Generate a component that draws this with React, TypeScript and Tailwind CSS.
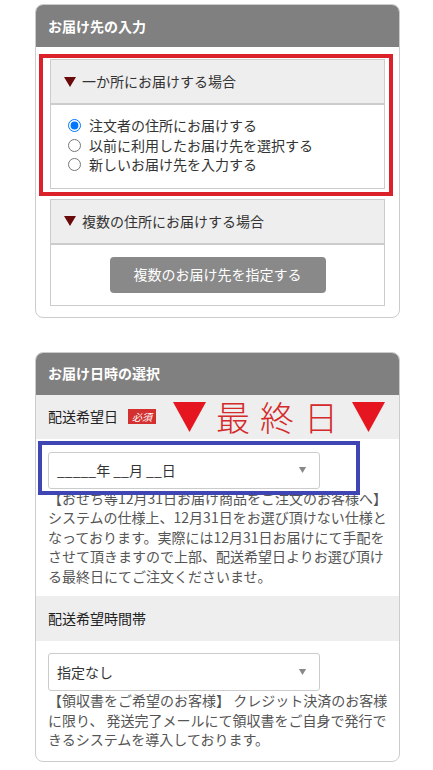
import React from "react";

function Tri({ className }: { className: string }) {
  return (
    <svg viewBox="0 0 12 10" className={className} aria-hidden="true">
      <path d="M0 0H12L6 10Z" fill="currentColor" />
    </svg>
  );
}

function BigTri({ className }: { className: string }) {
  return (
    <svg viewBox="0 0 33 30" className={className} aria-hidden="true">
      <path d="M0 0H33L16.5 30Z" fill="currentColor" />
    </svg>
  );
}

function SelectBox({ value, h }: { value: string; h: string }) {
  return (
    <div
      className={`flex w-[272px] items-center justify-between rounded-[3px] border border-[#ccc] bg-white pl-[8px] pr-[12px] text-[#333] ${h}`}
    >
      <span className="whitespace-pre">{value}</span>
      <Tri className="h-[6px] w-[9px] text-[#888]" />
    </div>
  );
}

const radios = [
  { label: "注文者の住所にお届けする", checked: true },
  { label: "以前に利用したお届け先を選択する", checked: false },
  { label: "新しいお届け先を入力する", checked: false },
];

export default function App() {
  return (
    <div className="min-h-[770px] bg-white pt-[4px] font-['Noto_Sans_CJK_JP','Noto_Sans',sans-serif] text-[14px] text-[#333]">
      <div className="ml-[35px] w-[365px]">
        {/* お届け先 */}
        <section className="overflow-hidden rounded-[8px] border border-[#ccc] bg-white">
          <h2 className="flex h-[42px] items-center bg-[#808080] pl-[12px] text-[14px] font-bold text-white">
            お届け先の入力
          </h2>
          <div className="px-[14px] pb-[11px] pt-[12px]">
            <div className="relative">
              <div className="border border-[#ccc]">
                <div className="flex h-[45px] items-center gap-[6px] border-b-2 border-[#ccc] bg-[#eee] pl-[13px]">
                  <Tri className="h-[10px] w-[12px] text-[#6b0a0a]" />
                  <span>一か所にお届けする場合</span>
                </div>
                <div className="flex flex-col pb-[13px] pl-[17px] pt-[11px] leading-[19.5px]">
                  {radios.map((r) => (
                    <label key={r.label} className="flex h-[19.5px] items-center gap-[8px]">
                      <input
                        type="radio"
                        name="dest"
                        defaultChecked={r.checked}
                        className="m-0 h-[13px] w-[13px]"
                      />
                      <span>{r.label}</span>
                    </label>
                  ))}
                </div>
              </div>
              <div className="pointer-events-none absolute -bottom-[7px] -left-[11px] -right-[8px] -top-[5px] border-4 border-[#db222b]" />
            </div>

            <div className="mt-[10px] border border-[#ccc]">
              <div className="flex h-[45px] items-center gap-[6px] border-b-2 border-[#ccc] bg-[#eee] pl-[13px]">
                <Tri className="h-[10px] w-[12px] text-[#6b0a0a]" />
                <span>複数の住所にお届けする場合</span>
              </div>
              <div className="pb-[12px] pt-[12px]">
                <button className="mx-auto flex h-[36px] w-[216px] items-center justify-center rounded-[4px] bg-[#898989] text-[14px] text-white">
                  複数のお届け先を指定する
                </button>
              </div>
            </div>
          </div>
        </section>

        {/* お届け日時 */}
        <section className="mt-[34px] overflow-hidden rounded-[8px] border border-[#ccc] bg-white">
          <h2 className="flex h-[42px] items-center bg-[#808080] pl-[12px] text-[14px] font-bold text-white">
            お届け日時の選択
          </h2>
          <div className="flex h-[44px] items-center bg-[#eee] pl-[12px]">
            <span className="text-[#222]">配送希望日</span>
            <span className="ml-[10px] flex h-[15px] w-[28px] items-center justify-center bg-[#d3302f] text-[10px] italic leading-none text-white">
              必須
            </span>
            <BigTri className="ml-[17px] h-[30px] w-[33px] text-[#e5161f]" />
            <span className="-mr-[10px] ml-[10px] text-[34px] font-light leading-[34px] tracking-[10px] text-[#d42a2a]">
              最終日
            </span>
            <BigTri className="ml-[12px] h-[30px] w-[37px] text-[#e5161f]" />
          </div>
          <div className="pb-[10px] pl-[12px] pr-[8px] pt-[13px]">
            <div className="relative w-[272px]">
              <SelectBox value="_____年 __月 __日" h="h-[37px]" />
              <div className="pointer-events-none absolute -bottom-[6px] -left-[10px] -right-[40px] -top-[11px] border-4 border-[#3f46b4]" />
            </div>
            <p className="leading-[19.5px] text-[#555]">
              【おせち等12月31日お届け商品をご注文のお客様へ】システムの仕様上、12月31日をお選び頂けない仕様となっております。実際には12月31日お届けにて手配をさせて頂きますので上部、配送希望日よりお選び頂ける最終日にてご注文くださいませ。
            </p>
          </div>
          <div className="flex h-[45px] items-center bg-[#eee] pl-[12px] text-[#222]">
            配送希望時間帯
          </div>
          <div className="pb-[11px] pl-[12px] pr-[8px] pt-[12px]">
            <SelectBox value="指定なし" h="h-[38px]" />
            <p className="leading-[19.5px] text-[#555]">
              【領収書をご希望のお客様】 クレジット決済のお客様に限り、 発送完了メールにて領収書をご自身で発行できるシステムを導入しております。
            </p>
          </div>
        </section>
      </div>
    </div>
  );
}
